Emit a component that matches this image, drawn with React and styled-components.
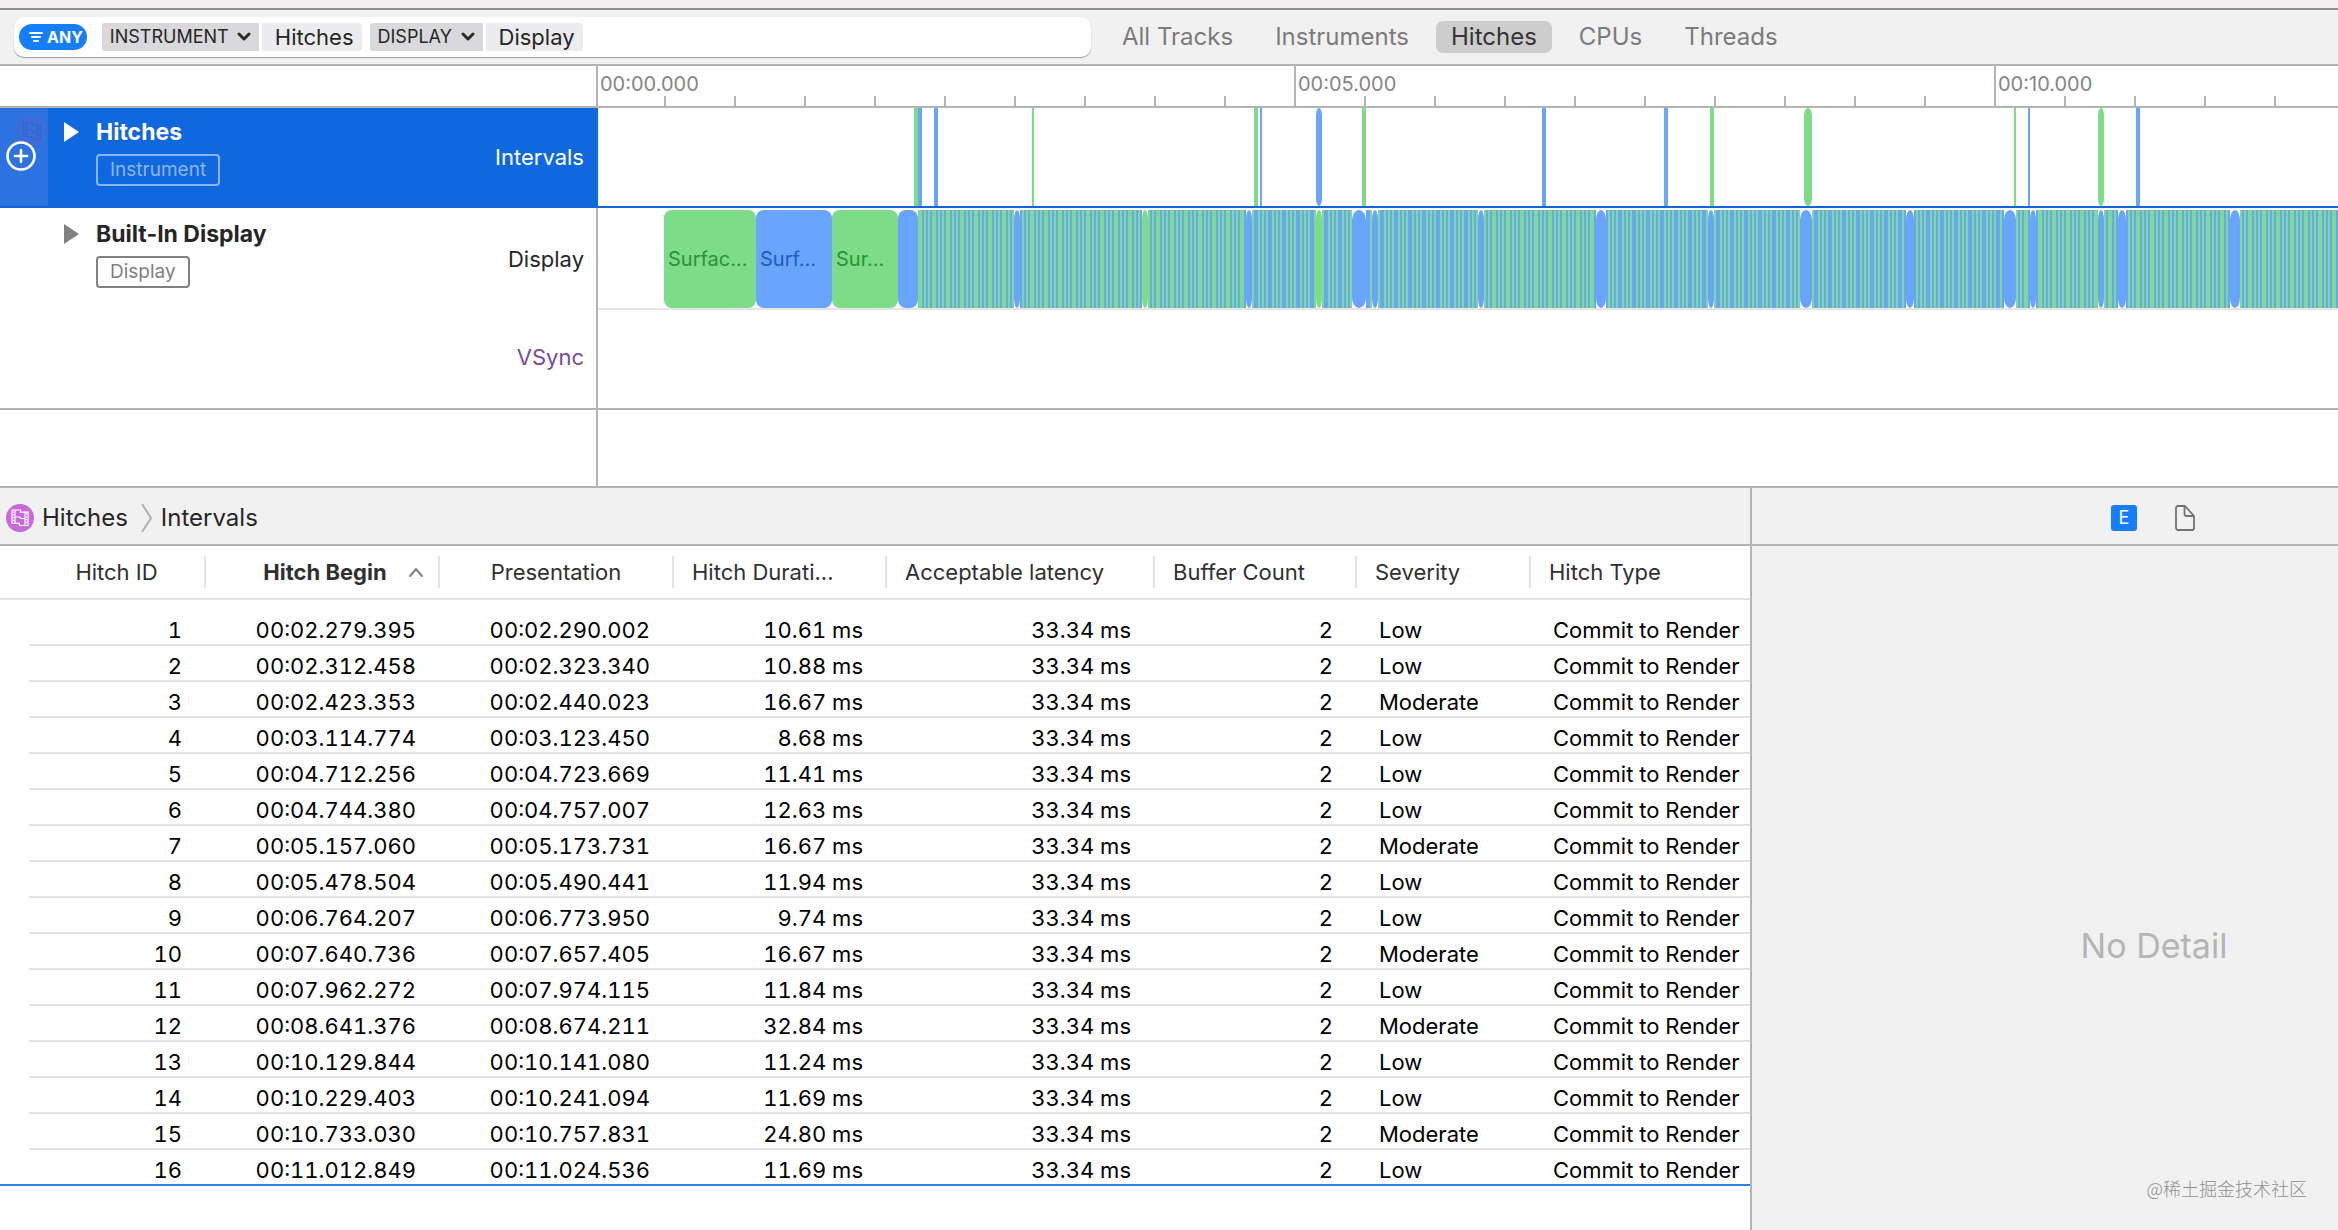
import React from "react";
import styled, { createGlobalStyle } from "styled-components";

const GREEN = "#7cdc87";
const BLUE = "#69a5ff";
const LINE = "#b4b4b4";

const scopes = ["All Tracks", "Instruments", "Hitches", "CPUs", "Threads"];

const filters = [
    { id: "filter-instrument", kind: "INSTRUMENT", value: "Hitches" },
    { id: "filter-display", kind: "DISPLAY", value: "Display" },
];

const columns = [
    { name: "Hitch ID", width: 177, align: "center" },
    { name: "Hitch Begin", width: 234, align: "center", sorted: true },
    { name: "Presentation", width: 234, align: "center" },
    { name: "Hitch Durati...", width: 213 },
    { name: "Acceptable latency", width: 268 },
    { name: "Buffer Count", width: 202 },
    { name: "Severity", width: 174 },
    { name: "Hitch Type" },
];

const hitches = [
    ["00:02.279.395", "00:02.290.002", "10.61 ms", "Low"],
    ["00:02.312.458", "00:02.323.340", "10.88 ms", "Low"],
    ["00:02.423.353", "00:02.440.023", "16.67 ms", "Moderate"],
    ["00:03.114.774", "00:03.123.450", "8.68 ms", "Low"],
    ["00:04.712.256", "00:04.723.669", "11.41 ms", "Low"],
    ["00:04.744.380", "00:04.757.007", "12.63 ms", "Low"],
    ["00:05.157.060", "00:05.173.731", "16.67 ms", "Moderate"],
    ["00:05.478.504", "00:05.490.441", "11.94 ms", "Low"],
    ["00:06.764.207", "00:06.773.950", "9.74 ms", "Low"],
    ["00:07.640.736", "00:07.657.405", "16.67 ms", "Moderate"],
    ["00:07.962.272", "00:07.974.115", "11.84 ms", "Low"],
    ["00:08.641.376", "00:08.674.211", "32.84 ms", "Moderate"],
    ["00:10.129.844", "00:10.141.080", "11.24 ms", "Low"],
    ["00:10.229.403", "00:10.241.094", "11.69 ms", "Low"],
    ["00:10.733.030", "00:10.757.831", "24.80 ms", "Moderate"],
    ["00:11.012.849", "00:11.024.536", "11.69 ms", "Low"],
];

// [start, width, color], in pixels from the start of the lane
const marks = [
    [316, 4, GREEN], [320, 4, BLUE], [336, 4, BLUE], [434, 2, GREEN],
    [656, 4, GREEN], [662, 2, BLUE], [718, 6, BLUE], [764, 4, GREEN],
    [944, 4, BLUE], [1066, 4, BLUE], [1112, 4, GREEN], [1206, 8, GREEN],
    [1416, 2, GREEN], [1430, 2, BLUE], [1500, 6, GREEN], [1538, 4, BLUE],
];

const surfaces = [
    { text: "Surfac...", width: 92, color: GREEN, ink: "#2a9138" },
    { text: "Surf...", width: 76, color: BLUE, ink: "#1c5cbd" },
    { text: "Sur...", width: 66, color: GREEN, ink: "#2a9138" },
    { text: "", width: 20, color: BLUE, ink: "#1c5cbd" },
];

// frames that stayed on screen longer, from the start of the frame strip
const longFrames = [
    [96, 6, BLUE], [224, 6, GREEN], [328, 6, BLUE], [398, 6, GREEN],
    [434, 14, BLUE], [454, 6, BLUE], [560, 6, BLUE], [678, 10, BLUE],
    [790, 6, BLUE], [882, 12, BLUE], [988, 8, BLUE], [1086, 12, BLUE],
    [1112, 6, BLUE], [1180, 6, BLUE], [1200, 8, BLUE], [1312, 10, BLUE],
];

// spans where the wide frame of each group is a green one
const greenSpans = [[0, 328], [566, 678], [1098, 9999]];

const frames = [];
for (let x = 0, n = 0; x < 2800; n++) {
    const green = greenSpans.some(([from, to]) => x >= from && x < to);
    const lead = n % 6 === 0;
    const even = n % 2 === 0;
    const width = lead ? 4 : 2;
    frames.push([x, width, even === green ? GREEN : BLUE]);
    x += width;
}

// one tick every half second, a labelled one every five
const ticks = Array.from({ length: 25 }, (_, i) => ({ 9: "00:05.000", 19: "00:10.000" })[i]);

const Chevron = () => (
    <svg width="14" height="10" viewBox="0 0 14 10" aria-hidden="true">
        <path d="M2 2l5 5 5-5" fill="none" stroke="#2b2b2b" strokeWidth="3" strokeLinecap="round" strokeLinejoin="round" />
    </svg>
);

const FilmIcon = ({ size, disc, ink }) => (
    <svg width={size} height={size} viewBox="0 0 28 28" aria-hidden="true">
        <circle cx="14" cy="14" r="14" fill={disc} />
        <g fill="none" stroke={ink} strokeWidth="1.2">
            <path d="M6 6h8.500v2.200H22v13.300h-8.500v-2.200H6z" />
            <path d="M9 6v13.300M19 8.200v13.300M9 13h4.500l1.500 1.500h4" />
            <path d="M7.500 7.500v11M20.500 9.500v11" strokeDasharray="1.2 1.6" />
        </g>
    </svg>
);

const Disclosure = ({ label, color }) => (
    <DisclosureButton type="button" aria-expanded="false" aria-label={label}>
        <svg width="16" height="20" viewBox="0 0 16 20" aria-hidden="true">
            <path d="M0 0l15 10L0 20z" fill={color} />
        </svg>
    </DisclosureButton>
);

const App = () => {
    return (
        <>
            <GlobalStyle />
            <Window>
                <TitleEdge />
                <Toolbar>
                    <FilterField>
                        <AnyButton type="button">
                            <svg width="14" height="12" viewBox="0 0 14 12" aria-hidden="true">
                                <path d="M1 2h12M3 6h8M5 10h4" stroke="#fff" strokeWidth="2" strokeLinecap="round" />
                            </svg>
                            ANY
                        </AnyButton>
                        {filters.map((f) => (
                            <Token key={f.id}>
                                <TokenKind htmlFor={f.id}>
                                    <select id={f.id} aria-label="Filter kind" defaultValue={f.kind}>
                                        <option>{f.kind}</option>
                                    </select>
                                    <Chevron />
                                </TokenKind>
                                <TokenValue>{f.value}</TokenValue>
                            </Token>
                        ))}
                        <FilterInput aria-label="Filter tracks" />
                    </FilterField>
                    <Scopes>
                        {scopes.map((s) => (
                            <Scope key={s} type="button" $active={s === "Hitches"}>{s}</Scope>
                        ))}
                    </Scopes>
                </Toolbar>

                <Track $height={42}>
                    <TrackSide />
                    <Ruler>
                        <RulerStart>00:00.000</RulerStart>
                        {ticks.map((label, i) => (
                            <Tick key={i} $major={label}>{label}</Tick>
                        ))}
                    </Ruler>
                </Track>

                <Track $height={100} $line="#1565d8">
                    <TrackSide $selected>
                        <Gutter $selected>
                            <FadedIcon><FilmIcon size={30} disc="#4a68d8" ink="#2f62cc" /></FadedIcon>
                            <AddButton type="button" aria-label="Add track">
                                <svg width="32" height="32" viewBox="0 0 32 32" aria-hidden="true">
                                    <g fill="none" stroke="#fff" strokeWidth="2.600" strokeLinecap="round">
                                        <circle cx="16" cy="16" r="13.500" />
                                        <path d="M16 10v12M10 16h12" />
                                    </g>
                                </svg>
                            </AddButton>
                        </Gutter>
                        <Disclosure label="Expand Hitches" color="#fff" />
                        <TrackName>
                            <h2>Hitches</h2>
                            <Badge $color="#8ab5f2">Instrument</Badge>
                        </TrackName>
                        <LaneLabels>
                            <LaneLabel $color="#fff">Intervals</LaneLabel>
                        </LaneLabels>
                    </TrackSide>
                    <Lanes>
                        <LaneChart height="98">
                            {marks.map(([x, w, color]) => (
                                <rect key={x} x={x} width={w} height="98" rx={w > 4 ? w / 2 : 0} ry={w > 4 ? 8 : 0} fill={color} />
                            ))}
                        </LaneChart>
                    </Lanes>
                </Track>

                <Track $height={202}>
                    <TrackSide>
                        <Gutter />
                        <Disclosure label="Expand Built-In Display" color="#808080" />
                        <TrackName>
                            <h2>Built-In Display</h2>
                            <Badge $color="#808080">Display</Badge>
                        </TrackName>
                        <LaneLabels>
                            <LaneLabel $color="#262626">Display</LaneLabel>
                            <LaneLabel $color="#7a48a0">VSync</LaneLabel>
                        </LaneLabels>
                    </TrackSide>
                    <Lanes>
                        <SurfaceLane>
                            {surfaces.map((s, i) => (
                                <Surface key={i} $width={s.width} $color={s.color} $ink={s.ink}>{s.text}</Surface>
                            ))}
                            <LaneChart height="98">
                                {frames.map(([x, w, color]) => (
                                    <rect key={x} x={x} width={w} height="98" fill={color} />
                                ))}
                                {longFrames.map(([x, w, color]) => (
                                    <g key={x}>
                                        <rect x={x} width={w} height="98" fill="#fff" />
                                        <rect x={x} width={w} height="98" rx={w / 2} ry="10" fill={color} />
                                    </g>
                                ))}
                            </LaneChart>
                        </SurfaceLane>
                    </Lanes>
                </Track>

                <Track $height={78}>
                    <TrackSide />
                    <Lanes />
                </Track>

                <Bottom>
                    <DetailPane>
                        <PaneBar as="nav" aria-label="Breadcrumb">
                            <FilmIcon size={28} disc="#c66ad8" ink="#fff" />
                            <Crumb href="#hitches">Hitches</Crumb>
                            <svg width="12" height="28" viewBox="0 0 12 28" aria-hidden="true">
                                <path d="M1 0l9 14-9 14" fill="none" stroke="#b0b0b0" strokeWidth="2" />
                            </svg>
                            <Crumb href="#intervals">Intervals</Crumb>
                        </PaneBar>
                        <Table>
                            <colgroup>
                                <col style={{ width: 29 }} />
                                {columns.map((c) => (
                                    <col key={c.name} style={{ width: c.width }} />
                                ))}
                            </colgroup>
                            <thead>
                                <tr>
                                    <HeadCell as="td" />
                                    {columns.map((c) => (
                                        <HeadCell key={c.name} scope="col" aria-sort={c.sorted ? "ascending" : undefined}>
                                            <HeadButton type="button" $align={c.align} $sorted={c.sorted}>
                                                {c.name}
                                                {c.sorted && (
                                                    <svg width="14" height="10" viewBox="0 0 14 10" aria-hidden="true">
                                                        <path d="M1 9l6-7 6 7" fill="none" stroke="#808080" strokeWidth="2" strokeLinecap="round" />
                                                    </svg>
                                                )}
                                            </HeadButton>
                                        </HeadCell>
                                    ))}
                                </tr>
                            </thead>
                            <tbody>
                                <SpacerRow><td colSpan={9} /></SpacerRow>
                                {hitches.map(([begin, presentation, duration, severity], i) => (
                                    <Row key={begin}>
                                        <td />
                                        <Cell $right>{i + 1}</Cell>
                                        <Cell $right>{begin}</Cell>
                                        <Cell $right>{presentation}</Cell>
                                        <Cell $right>{duration}</Cell>
                                        <Cell $right>33.34 ms</Cell>
                                        <Cell $right>2</Cell>
                                        <Cell>{severity}</Cell>
                                        <Cell>Commit to Render</Cell>
                                    </Row>
                                ))}
                            </tbody>
                        </Table>
                    </DetailPane>
                    <Inspector>
                        <InspectorBar>
                            <ExtendedButton type="button" aria-label="Extended detail">E</ExtendedButton>
                            <FileButton type="button" aria-label="Run info">
                                <svg width="20" height="26" viewBox="0 0 20 26" aria-hidden="true">
                                    <g fill="none" stroke="#737373" strokeWidth="1.800" strokeLinejoin="round">
                                        <path d="M3 1h7l9 10v12a2 2 0 0 1-2 2H3a2 2 0 0 1-2-2V3a2 2 0 0 1 2-2z" />
                                        <path d="M9.500 1v8a2 2 0 0 0 2 2H19" />
                                    </g>
                                </svg>
                            </FileButton>
                        </InspectorBar>
                        <Empty>No Detail</Empty>
                    </Inspector>
                </Bottom>
                <Watermark>@稀土掘金技术社区</Watermark>
            </Window>
        </>
    );
};

const GlobalStyle = createGlobalStyle`
    * {
        box-sizing: border-box;
    }

    body {
        margin: 0;
        background: #fff;
        color: #262626;
        font-family: Inter, "Noto Sans CJK SC", sans-serif;
        font-size: 22px;
        line-height: 28px;
    }

    button, input, select {
        margin: 0;
        padding: 0;
        border: 0;
        background: none;
        color: inherit;
        font: inherit;
    }

    svg {
        display: block;
        flex: none;
    }
`;

const Window = styled.div`
    position: relative;
    display: flex;
    flex-direction: column;
    min-height: 100vh;
    overflow: hidden;
`;

const TitleEdge = styled.div`
    height: 10px;
    background: #f4f0f1;
    border-bottom: 2px solid #8e8e8e;
`;

const Toolbar = styled.div`
    display: flex;
    align-items: center;
    gap: 16px;
    height: 56px;
    padding: 0 14px;
    background: #f1f1f1;
    border-bottom: 2px solid ${LINE};
`;

const FilterField = styled.div`
    display: flex;
    align-items: center;
    gap: 8px;
    width: 1077px;
    height: 40px;
    padding: 0 5px;
    background: #fff;
    border-radius: 10px;
    box-shadow: 0 1px 1px rgba(0, 0, 0, 0.35);
`;

const AnyButton = styled.button`
    display: flex;
    align-items: center;
    gap: 4px;
    height: 26px;
    padding: 0 4px 0 10px;
    margin-right: 7px;
    border-radius: 13px;
    background: #147efb;
    color: #fff;
    font-size: 16px;
    font-weight: 700;
`;

const Token = styled.div`
    display: flex;
    gap: 3px;
    height: 28px;
`;

const TokenKind = styled.label`
    display: flex;
    align-items: center;
    gap: 8px;
    padding: 0 8px;
    background: #d9d8db;
    border-radius: 3px 0 0 3px;
    font-size: 18px;

    select {
        appearance: none;
    }
`;

const TokenValue = styled.span`
    padding: 0 8px 0 13px;
    background: #ececee;
    border-radius: 0 3px 3px 0;
`;

const FilterInput = styled.input`
    flex: 1;
    min-width: 0;
    outline: none;
`;

const Scopes = styled.nav`
    display: flex;
    gap: 12px;
`;

const Scope = styled.button`
    height: 32px;
    padding: 0 15px;
    border-radius: 7px;
    background: ${(p) => (p.$active ? "#cdcdcd" : "none")};
    color: ${(p) => (p.$active ? "#343434" : "#7b7b7b")};
    font-size: 24px;
    white-space: nowrap;
`;

const Track = styled.section`
    display: flex;
    height: ${(p) => p.$height}px;
    border-bottom: 2px solid ${(p) => p.$line || LINE};
`;

const TrackSide = styled.div`
    display: flex;
    flex: none;
    width: 598px;
    padding-top: ${(p) => (p.$selected ? 0 : 2)}px;
    border-right: 2px solid ${(p) => (p.$selected ? "#1068df" : LINE)};
    background: ${(p) => (p.$selected ? "#1068df" : "#fff")};
    color: ${(p) => (p.$selected ? "#fff" : "#262626")};
`;

const Gutter = styled.div`
    position: relative;
    display: flex;
    align-items: center;
    width: 48px;
    padding: 0 0 2px 5px;
    background: ${(p) => (p.$selected ? "#2c73e0" : "none")};
`;

const FadedIcon = styled.span`
    position: absolute;
    top: 8px;
    left: 17px;
    opacity: 0.6;
`;

const AddButton = styled.button`
    position: relative;
`;

const DisclosureButton = styled.button`
    align-self: flex-start;
    margin: 14px 16px 0;
`;

const TrackName = styled.div`
    padding-top: 10px;

    h2 {
        margin: 0 0 8px;
        font-size: 23px;
        font-weight: 700;
    }
`;

const Badge = styled.span`
    display: inline-block;
    padding: 0 12px;
    border: 2px solid ${(p) => p.$color};
    border-radius: 4px;
    color: ${(p) => p.$color};
    font-size: 19px;
`;

const LaneLabels = styled.div`
    margin-left: auto;
    padding-right: 12px;
    text-align: right;
`;

const LaneLabel = styled.div`
    color: ${(p) => p.$color};
    line-height: 98px;
`;

const Ruler = styled.div`
    display: flex;
    align-items: flex-end;
    flex: 1;
    min-width: 0;
    overflow: hidden;
    color: #858585;
    font-size: 20px;
    line-height: 36px;
    white-space: nowrap;
`;

const RulerStart = styled.div`
    flex: none;
    align-self: stretch;
    width: 66px;
    padding-left: 2px;
`;

const Tick = styled.div`
    flex: none;
    width: 70px;
    height: ${(p) => (p.$major ? 40 : 10)}px;
    padding-left: 2px;
    border-left: 2px solid ${LINE};
`;

const Lanes = styled.div`
    flex: 1;
    min-width: 0;
`;

const LaneChart = styled.svg`
    flex: 1;
    width: 100%;
    min-width: 0;
`;

const SurfaceLane = styled.div`
    display: flex;
    padding: 2px 0 0 66px;
    border-bottom: 2px solid #e5e5e5;
`;

const Surface = styled.div`
    flex: none;
    width: ${(p) => p.$width}px;
    height: 98px;
    padding-left: 4px;
    border-radius: 8px;
    background: ${(p) => p.$color};
    color: ${(p) => p.$ink};
    font-size: 20px;
    line-height: 98px;
`;

const Bottom = styled.div`
    display: flex;
    flex: 1;
`;

const DetailPane = styled.main`
    flex: 1;
    min-width: 0;
    border-right: 2px solid ${LINE};
`;

const PaneBar = styled.div`
    display: flex;
    align-items: center;
    gap: 8px;
    height: 58px;
    padding: 4px 6px 0;
    background: #f1f1f1;
    border-bottom: 2px solid ${LINE};
`;

const Crumb = styled.a`
    color: #262626;
    font-size: 24px;
    text-decoration: none;
    white-space: nowrap;

    & + svg {
        margin-left: 5px;
    }
`;

const Table = styled.table`
    width: 100%;
    table-layout: fixed;
    border-collapse: separate;
    border-spacing: 0;
`;

const HeadCell = styled.th`
    height: 54px;
    padding: 0;
    border-bottom: 2px solid #e3e3e3;
    font-weight: 400;
`;

const HeadButton = styled.button`
    display: flex;
    align-items: center;
    justify-content: ${(p) => p.$align || "flex-start"};
    gap: 22px;
    width: 100%;
    height: 32px;
    padding-left: ${(p) => (p.$sorted ? 42 : p.$align ? 0 : 18)}px;
    border-right: 2px solid #e3e3e3;
    color: #303030;
    font-weight: ${(p) => (p.$sorted ? 700 : 400)};
    white-space: nowrap;

    th:last-child > & {
        border-right: 0;
    }
`;

const SpacerRow = styled.tr`
    height: 10px;

    td {
        padding: 0;
    }
`;

const Row = styled.tr`
    height: 36px;

    &:last-child td {
        border-bottom: 2px solid #2a82e4;
    }
`;

const Cell = styled.td`
    padding: 7px 0 1px;
    padding-right: ${(p) => (p.$right ? 24 : 0)}px;
    padding-left: ${(p) => (p.$right ? 0 : 22)}px;
    border-bottom: 2px solid #e3e3e3;
    color: #000;
    font-variant-numeric: tabular-nums;
    line-height: 26px;
    text-align: ${(p) => (p.$right ? "right" : "left")};
    white-space: nowrap;
`;

const Inspector = styled.aside`
    display: flex;
    flex: none;
    flex-direction: column;
    width: 586px;
    background: #f1f1f1;
`;

const InspectorBar = styled(PaneBar)`
    justify-content: center;
    gap: 38px;
    padding-left: 222px;
`;

const ExtendedButton = styled.button`
    width: 26px;
    height: 26px;
    border-radius: 3px;
    background: #147efb;
    color: #fff;
    font-size: 18px;
    line-height: 26px;
`;

const FileButton = styled.button`
    width: 20px;
`;

const Empty = styled.p`
    display: flex;
    flex: 1;
    align-items: center;
    justify-content: center;
    margin: 0;
    padding: 116px 0 0 218px;
    color: #b5b5b5;
    font-size: 34px;
`;

const Watermark = styled.div`
    position: absolute;
    right: 31px;
    bottom: 28px;
    color: #909090;
    font-family: "Noto Sans CJK SC", sans-serif;
    font-size: 18px;
    font-weight: 300;
`;

export default App;
